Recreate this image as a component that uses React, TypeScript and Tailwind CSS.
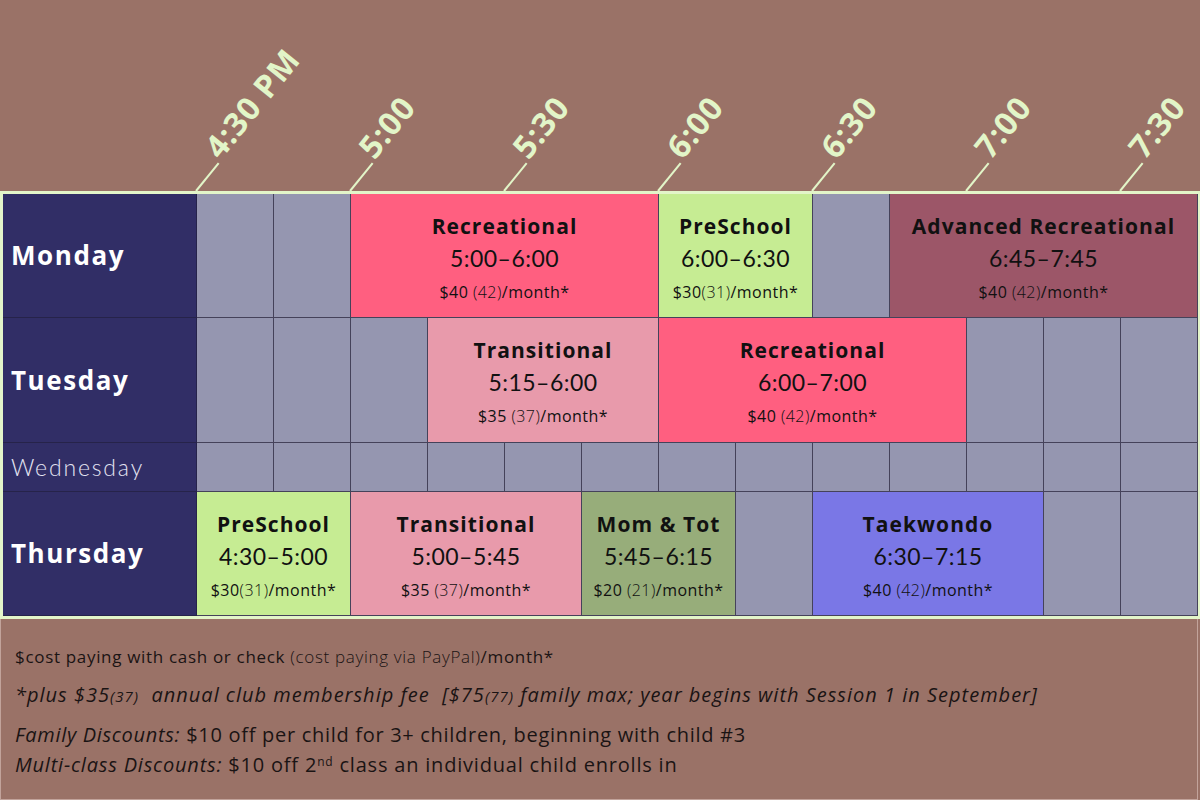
type ClassInfo = {
  title: string;
  time: string;
  cash: string;
  paypal: string;
  gap?: boolean;
  color: string;
};

type Cell = { span: number; info?: ClassInfo };

const spanClass: Record<number, string> = {
  1: 'col-span-1',
  2: 'col-span-2',
  3: 'col-span-3',
  4: 'col-span-4',
};

const empty = (n: number): Cell[] => Array.from({ length: n }, () => ({ span: 1 }));

const rows: { day: string; light?: boolean; cells: Cell[] }[] = [
  {
    day: 'Monday',
    cells: [
      ...empty(2),
      { span: 4, info: { title: 'Recreational', time: '5:00–6:00', cash: '$40', paypal: '(42)', gap: true, color: 'bg-[#ff5f80]' } },
      { span: 2, info: { title: 'PreSchool', time: '6:00–6:30', cash: '$30', paypal: '(31)', color: 'bg-[#c6ec93]' } },
      ...empty(1),
      { span: 4, info: { title: 'Advanced Recreational', time: '6:45–7:45', cash: '$40', paypal: '(42)', gap: true, color: 'bg-[#9c5668]' } },
    ],
  },
  {
    day: 'Tuesday',
    cells: [
      ...empty(3),
      { span: 3, info: { title: 'Transitional', time: '5:15–6:00', cash: '$35', paypal: '(37)', gap: true, color: 'bg-[#e89aab]' } },
      { span: 4, info: { title: 'Recreational', time: '6:00–7:00', cash: '$40', paypal: '(42)', gap: true, color: 'bg-[#ff5f80]' } },
      ...empty(3),
    ],
  },
  { day: 'Wednesday', light: true, cells: empty(13) },
  {
    day: 'Thursday',
    cells: [
      { span: 2, info: { title: 'PreSchool', time: '4:30–5:00', cash: '$30', paypal: '(31)', color: 'bg-[#c6ec93]' } },
      { span: 3, info: { title: 'Transitional', time: '5:00–5:45', cash: '$35', paypal: '(37)', gap: true, color: 'bg-[#e89aab]' } },
      { span: 2, info: { title: 'Mom & Tot', time: '5:45–6:15', cash: '$20', paypal: '(21)', gap: true, color: 'bg-[#97ad7a]' } },
      ...empty(1),
      { span: 3, info: { title: 'Taekwondo', time: '6:30–7:15', cash: '$40', paypal: '(42)', gap: true, color: 'bg-[#7a77e6]' } },
      ...empty(2),
    ],
  },
];

const times = ['4:30 PM', '5:00', '5:30', '6:00', '6:30', '7:00', '7:30'];

function TimeLabel({ label }: { label: string }) {
  return (
    <div className="relative w-[154px] shrink-0">
      <div className="absolute left-0 top-[-20px] flex h-[40px] origin-left -rotate-[51deg] items-center whitespace-nowrap">
        <span className="h-[2px] w-[36px] bg-[#e2f5c8]" />
        <span className="relative top-[-12px] ml-[3px] font-['Open_Sans',sans-serif] text-[32px] font-bold leading-none tracking-[0.03em] text-[#e2f5c8]">
          {label}
        </span>
      </div>
    </div>
  );
}

function ClassCell({ cell }: { cell: Cell }) {
  const info = cell.info;
  if (!info) {
    return <div className={`${spanClass[cell.span]} border-b border-r border-[#45425a] bg-[#9596b0]`} />;
  }
  return (
    <div
      className={`${spanClass[cell.span]} ${info.color} flex flex-col items-center justify-center border-b border-r border-[#45425a] pt-[6px] text-[#111]`}
    >
      <div className="font-['Open_Sans',sans-serif] text-[21px] font-bold leading-[32px] tracking-[0.05em]">
        {info.title}
      </div>
      <div className="text-[23px] leading-[32px] tracking-[0.02em]">{info.time}</div>
      <div className="mt-[2px] font-['Open_Sans',sans-serif] text-[16px] leading-[32px] tracking-[0.03em]">
        {info.cash}
        {info.gap ? ' ' : ''}
        <span className="font-light">{info.paypal}</span>/month*
      </div>
    </div>
  );
}

export default function App() {
  return (
    <div className="h-[800px] w-[1200px] overflow-hidden bg-[#9a7267] font-['Lato',sans-serif]">
      <div className="flex h-[191px] items-end pl-[196px]">
        {times.map((t) => (
          <TimeLabel key={t} label={t} />
        ))}
      </div>

      <div className="grid w-[1201px] grid-cols-[194px_repeat(13,77px)] grid-rows-[124px_125px_49px_124px] border-[3px] border-[#e3f5c9]">
        {rows.map((row) => (
          <div key={row.day} className="contents">
            <div className="col-span-1 flex items-center border-b border-r border-[#26234a] bg-[#312e66] pl-[8px]">
              {row.light ? (
                <span className="text-[23px] font-light tracking-[0.08em] text-[#e4e4f2]">{row.day}</span>
              ) : (
                <span className="font-['Open_Sans',sans-serif] text-[26px] font-bold tracking-[0.06em] text-white">
                  {row.day}
                </span>
              )}
            </div>
            {row.cells.map((cell, i) => (
              <ClassCell key={i} cell={cell} />
            ))}
          </div>
        ))}
      </div>

      <div className="h-[181px] w-[1198px] border border-t-0 border-[#c2a39b] pl-[14px] pt-[28px] font-['Open_Sans',sans-serif] text-[#1a1414]">
        <p className="text-[17px] leading-[20px] tracking-[0.04em]">
          $cost paying with cash or check <span className="font-light">(cost paying via PayPal)</span>/month*
        </p>
        <p className="mt-[15px] text-[20px] italic leading-[26px] tracking-[0.05em]">
          *plus $35<span className="text-[15px]">(37)</span>&nbsp; annual club membership fee &nbsp;[$75
          <span className="text-[15px]">(77)</span> family max; year begins with Session 1 in September]
        </p>
        <p className="mt-[13px] text-[20px] leading-[26px] tracking-[0.035em]">
          <i>Family Discounts:</i> $10 off per child for 3+ children, beginning with child #3
        </p>
        <p className="mt-[4px] text-[20px] leading-[26px] tracking-[0.04em]">
          <i>Multi-class Discounts:</i> $10 off 2<sup className="text-[12px]">nd</sup> class an individual child enrolls in
        </p>
      </div>
    </div>
  );
}
